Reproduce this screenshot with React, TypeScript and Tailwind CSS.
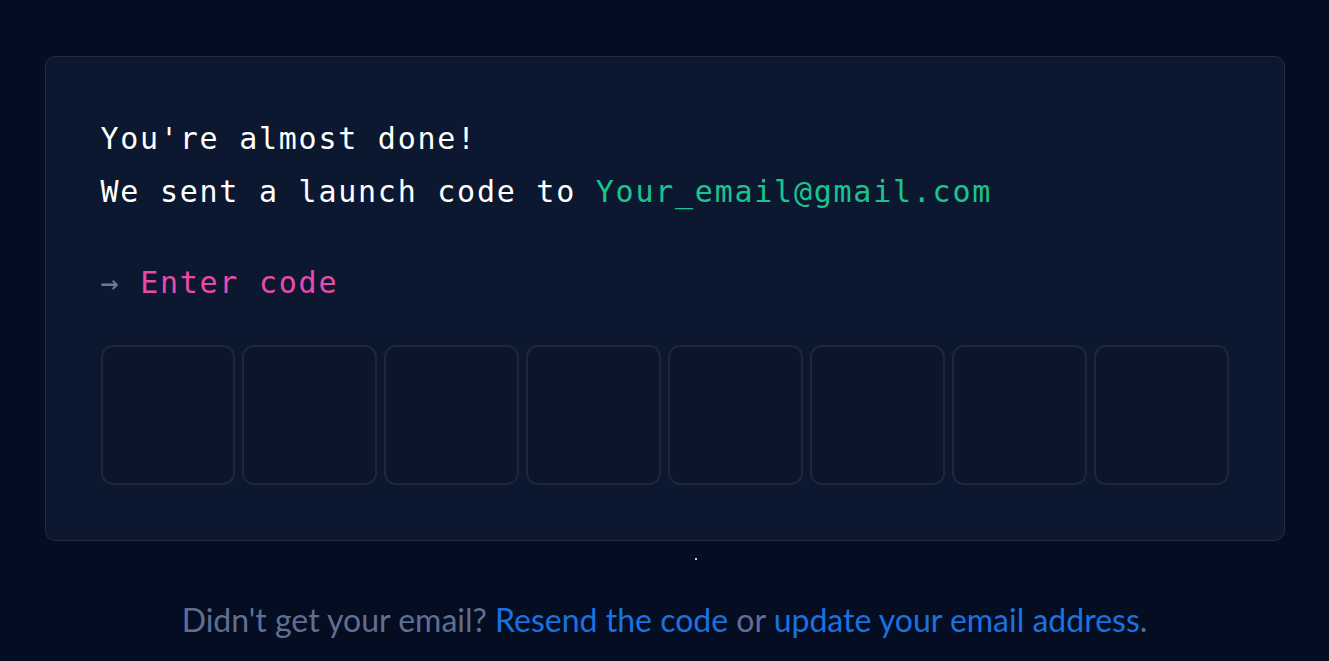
import React from "react";

const boxes = [0, 1, 2, 3, 4, 5, 6, 7];

function CodeBoxes() {
  return (
    <div className="mt-[36px] grid grid-cols-8 gap-[7px]">
      {boxes.map((i) => (
        <input
          key={i}
          type="text"
          maxLength={1}
          aria-label={`Digit ${i + 1}`}
          className="h-[140px] w-full rounded-[12px] border-2 border-[#1f2738] bg-[#0b162b] text-center text-white outline-none"
        />
      ))}
    </div>
  );
}

export default function App() {
  return (
    <div className="min-h-[661px] w-full bg-[#040d21] pt-[56px]">
      <div className="mx-auto w-[1240px] rounded-[10px] border border-[#232b3d] bg-[#0c1730] p-[55px] font-['DejaVu_Sans_Mono',monospace] text-[30px] leading-[53px] tracking-[1.75px] text-white">
        <p>You're almost done!</p>
        <p>
          We sent a launch code to{" "}
          <span className="text-[#18c58e]">Your_email@gmail.com</span>
        </p>
        <p className="mt-[38px]">
          <span className="text-[#6d7b9a]">→</span>{" "}
          <span className="text-[#ea4aaa]">Enter code</span>
        </p>
        <CodeBoxes />
      </div>

      <div className="h-[42px]">
        <div className="mx-auto mt-[17px] h-[2px] w-[2px] translate-x-[31px] bg-white/80" />
      </div>

      <p className="text-center font-['Lato',sans-serif] text-[32px] leading-[40px] text-[#5f6f92]">
        Didn't get your email?{" "}
        <a href="#" className="text-[#1a72e0]">
          Resend the code
        </a>{" "}
        or{" "}
        <a href="#" className="text-[#1a72e0]">
          update your email address
        </a>
        .
      </p>
    </div>
  );
}
